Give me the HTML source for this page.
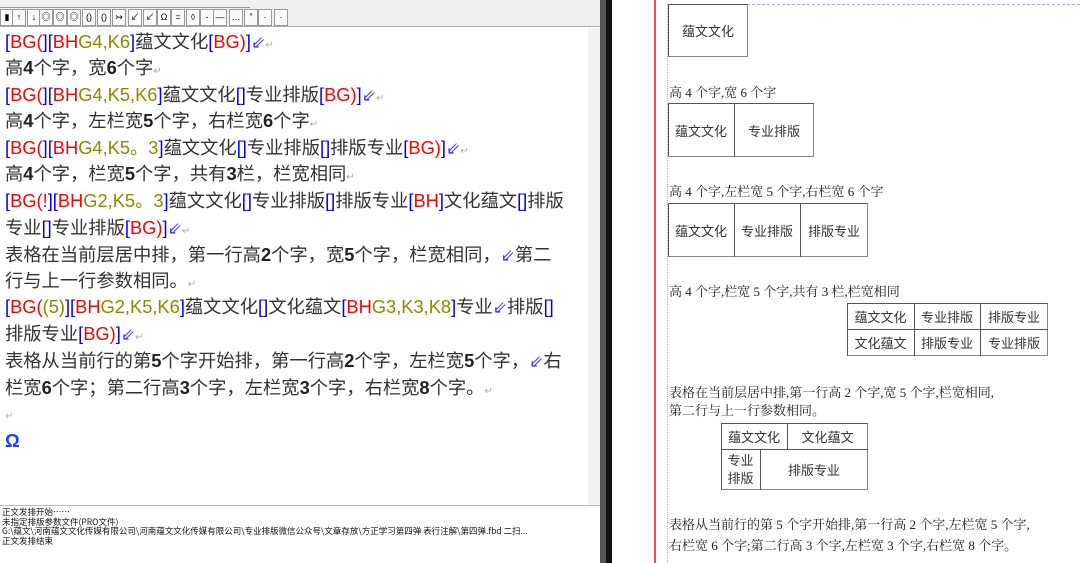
<!DOCTYPE html>
<html><head><meta charset="utf-8"><style>
*{margin:0;padding:0;box-sizing:border-box}
body{width:1080px;height:563px;overflow:hidden;background:#fff;position:relative;font-family:"Liberation Sans","Noto Sans CJK SC",sans-serif}
.a{position:absolute}
.tb{left:0;top:0;width:600px;height:27px;background:#f0f0f0;border-bottom:1px solid #aaa}
.btn{position:absolute;top:4px;width:14px;height:17px;border:1px solid #999;background:#fafafa;font-size:9px;line-height:15px;text-align:center;color:#000}
.ln{position:absolute;left:5px;font-size:18.3px;line-height:26px;height:26px;color:#333;white-space:nowrap}
.b{color:#0000ff}.r{color:#f00}.o{color:#8a8a00}.k{font-weight:bold;color:#222}
.ar{color:#3a3aff;font-size:17px}.p{color:#aaa;font-size:10px}
.log{left:0;top:505px;width:600px;height:58px;border-top:1px solid #bbb;background:#fff;font-size:8.5px;line-height:9.5px;color:#111;padding:2px 2px;white-space:nowrap;font-family:"Noto Sans CJK SC",sans-serif}
.rt{font-family:"Liberation Serif","Noto Serif CJK SC",serif;font-size:13px;color:#222;white-space:nowrap;position:absolute;left:669px}
.box{position:absolute;border:1px solid #555;border-right-color:#888;border-bottom-color:#888}
.c{position:absolute;font-family:"Noto Sans CJK SC",sans-serif;font-size:13px;color:#333;text-align:center;white-space:nowrap}
.vl{position:absolute;width:1px;background:#555}
.hl{position:absolute;height:1px;background:#555}
</style></head><body>
<div class="a tb"></div>
<div class="a" style="left:0;top:0;width:250px;height:8px;border-bottom:1px solid #999"></div>
<div class="btn" style="left:0;top:9px">▮</div>
<div class="btn" style="left:12px;top:9px">↑</div>
<div class="btn" style="left:27px;top:9px">↓</div>
<div class="btn" style="left:39px;top:9px">◎</div>
<div class="btn" style="left:53px;top:9px">◎</div>
<div class="btn" style="left:67px;top:9px">◎</div>
<div class="btn" style="left:82px;top:9px">()</div>
<div class="btn" style="left:97px;top:9px">()</div>
<div class="btn" style="left:112px;top:9px">↣</div>
<div class="btn" style="left:128px;top:9px">↙</div>
<div class="btn" style="left:143px;top:9px">↙</div>
<div class="btn" style="left:157px;top:9px">Ω</div>
<div class="btn" style="left:171px;top:9px">=</div>
<div class="btn" style="left:186px;top:9px">◊</div>
<div class="btn" style="left:200px;top:9px">-</div>
<div class="btn" style="left:213px;top:9px">—</div>
<div class="btn" style="left:229px;top:9px">…</div>
<div class="btn" style="left:244px;top:9px">”</div>
<div class="btn" style="left:258px;top:9px">·</div>
<div class="btn" style="left:274px;top:9px">·</div>
<div class="a" style="left:588px;top:28px;width:12px;height:477px;background:#f2f2f2"></div>
<div class="a" style="left:600px;top:0;width:6px;height:563px;background:#555"></div>
<div class="a" style="left:606px;top:0;width:6px;height:563px;background:#111"></div>

<div class="ln" style="top:29px"><span class="b">[</span><span class="r">BG(</span><span class="b">][</span><span class="r">BH</span><span class="o">G4,K6</span><span class="b">]</span>蕴文文化<span class="b">[</span><span class="r">BG)</span><span class="b">]</span><span class="ar">⇙</span><span class="p">↵</span></div>
<div class="ln" style="top:55px">高<span class="k">4</span>个字，宽<span class="k">6</span>个字<span class="p">↵</span></div>
<div class="ln" style="top:82px"><span class="b">[</span><span class="r">BG(</span><span class="b">][</span><span class="r">BH</span><span class="o">G4,K5,K6</span><span class="b">]</span>蕴文文化<span class="b">[]</span>专业排版<span class="b">[</span><span class="r">BG)</span><span class="b">]</span><span class="ar">⇙</span><span class="p">↵</span></div>
<div class="ln" style="top:108px">高<span class="k">4</span>个字，左栏宽<span class="k">5</span>个字，右栏宽<span class="k">6</span>个字<span class="p">↵</span></div>
<div class="ln" style="top:135px"><span class="b">[</span><span class="r">BG(</span><span class="b">][</span><span class="r">BH</span><span class="o">G4,K5。3</span><span class="b">]</span>蕴文文化<span class="b">[]</span>专业排版<span class="b">[]</span>排版专业<span class="b">[</span><span class="r">BG)</span><span class="b">]</span><span class="ar">⇙</span><span class="p">↵</span></div>
<div class="ln" style="top:161px">高<span class="k">4</span>个字，栏宽<span class="k">5</span>个字，共有<span class="k">3</span>栏，栏宽相同<span class="p">↵</span></div>
<div class="ln" style="top:188px"><span class="b">[</span><span class="r">BG(!</span><span class="b">][</span><span class="r">BH</span><span class="o">G2,K5。3</span><span class="b">]</span>蕴文文化<span class="b">[]</span>专业排版<span class="b">[]</span>排版专业<span class="b">[</span><span class="r">BH</span><span class="b">]</span>文化蕴文<span class="b">[]</span>排版</div>
<div class="ln" style="top:215px">专业<span class="b">[]</span>专业排版<span class="b">[</span><span class="r">BG)</span><span class="b">]</span><span class="ar">⇙</span><span class="p">↵</span></div>
<div class="ln" style="top:242px">表格在当前层居中排，第一行高<span class="k">2</span>个字，宽<span class="k">5</span>个字，栏宽相同，<span class="ar">⇙</span>第二</div>
<div class="ln" style="top:268px">行与上一行参数相同。<span class="p">↵</span></div>
<div class="ln" style="top:294px"><span class="b">[</span><span class="r">BG(</span><span class="o">(5)</span><span class="b">][</span><span class="r">BH</span><span class="o">G2,K5,K6</span><span class="b">]</span>蕴文文化<span class="b">[]</span>文化蕴文<span class="b">[</span><span class="r">BH</span><span class="o">G3,K3,K8</span><span class="b">]</span>专业<span class="ar">⇙</span>排版<span class="b">[]</span></div>
<div class="ln" style="top:321px">排版专业<span class="b">[</span><span class="r">BG)</span><span class="b">]</span><span class="ar">⇙</span><span class="p">↵</span></div>
<div class="ln" style="top:348px">表格从当前行的第<span class="k">5</span>个字开始排，第一行高<span class="k">2</span>个字，左栏宽<span class="k">5</span>个字，<span class="ar">⇙</span>右</div>
<div class="ln" style="top:375px">栏宽<span class="k">6</span>个字；第二行高<span class="k">3</span>个字，左栏宽<span class="k">3</span>个字，右栏宽<span class="k">8</span>个字。<span class="p">↵</span></div>
<div class="ln" style="top:400px"><span class="p">↵</span></div>
<div class="ln" style="top:428px;color:#1a3aff;font-weight:bold">Ω</div>

<div class="a log">正文发排开始……<br>未指定排版参数文件(PRO文件)<br>G:\蕴文\河南蕴文文化传媒有限公司\河南蕴文文化传媒有限公司\专业排版微信公众号\文章存放\方正学习第四弹 表行注解\第四弹.fbd 二扫...<br>正文发排结束</div>

<div class="a" style="left:654px;top:0;width:2px;height:563px;background:#f05050"></div>
<div class="a" style="left:667px;top:4px;width:413px;border-top:1px dashed #a8a8ff"></div>
<div class="a" style="left:667px;top:4px;height:559px;border-left:1px dotted #a8a8ff"></div>

<div class="box" style="left:668px;top:4px;width:80px;height:53px"></div>
<div class="c" style="left:668px;top:21px;width:80px">蕴文文化</div>
<div class="rt" style="top:82px">高 4 个字,宽 6 个字</div>

<div class="box" style="left:668px;top:103px;width:146px;height:54px"></div>
<div class="vl" style="left:734px;top:103px;height:54px"></div>
<div class="c" style="left:668px;top:121px;width:66px">蕴文文化</div>
<div class="c" style="left:734px;top:121px;width:80px">专业排版</div>
<div class="rt" style="top:181px">高 4 个字,左栏宽 5 个字,右栏宽 6 个字</div>

<div class="box" style="left:668px;top:203px;width:200px;height:54px"></div>
<div class="vl" style="left:734px;top:203px;height:54px"></div>
<div class="vl" style="left:800px;top:203px;height:54px"></div>
<div class="c" style="left:668px;top:221px;width:66px">蕴文文化</div>
<div class="c" style="left:734px;top:221px;width:66px">专业排版</div>
<div class="c" style="left:800px;top:221px;width:68px">排版专业</div>
<div class="rt" style="top:281px">高 4 个字,栏宽 5 个字,共有 3 栏,栏宽相同</div>

<div class="box" style="left:847px;top:303px;width:201px;height:53px"></div>
<div class="hl" style="left:847px;top:329px;width:201px"></div>
<div class="vl" style="left:914px;top:303px;height:53px"></div>
<div class="vl" style="left:980px;top:303px;height:53px"></div>
<div class="c" style="left:847px;top:307px;width:67px">蕴文文化</div>
<div class="c" style="left:914px;top:307px;width:66px">专业排版</div>
<div class="c" style="left:980px;top:307px;width:68px">排版专业</div>
<div class="c" style="left:847px;top:333px;width:67px">文化蕴文</div>
<div class="c" style="left:914px;top:333px;width:66px">排版专业</div>
<div class="c" style="left:980px;top:333px;width:68px">专业排版</div>

<div class="rt" style="top:382px">表格在当前层居中排,第一行高 2 个字,宽 5 个字,栏宽相同,</div>
<div class="rt" style="top:400px">第二行与上一行参数相同。</div>

<div class="box" style="left:721px;top:423px;width:147px;height:67px"></div>
<div class="hl" style="left:721px;top:449px;width:147px"></div>
<div class="vl" style="left:787px;top:423px;height:26px"></div>
<div class="vl" style="left:760px;top:449px;height:41px"></div>
<div class="c" style="left:721px;top:427px;width:66px">蕴文文化</div>
<div class="c" style="left:787px;top:427px;width:81px">文化蕴文</div>
<div class="c" style="left:721px;top:451px;width:39px;line-height:18px">专业<br>排版</div>
<div class="c" style="left:760px;top:460px;width:108px">排版专业</div>

<div class="rt" style="top:514px">表格从当前行的第 5 个字开始排,第一行高 2 个字,左栏宽 5 个字,</div>
<div class="rt" style="top:535px">右栏宽 6 个字;第二行高 3 个字,左栏宽 3 个字,右栏宽 8 个字。</div>
</body></html>
